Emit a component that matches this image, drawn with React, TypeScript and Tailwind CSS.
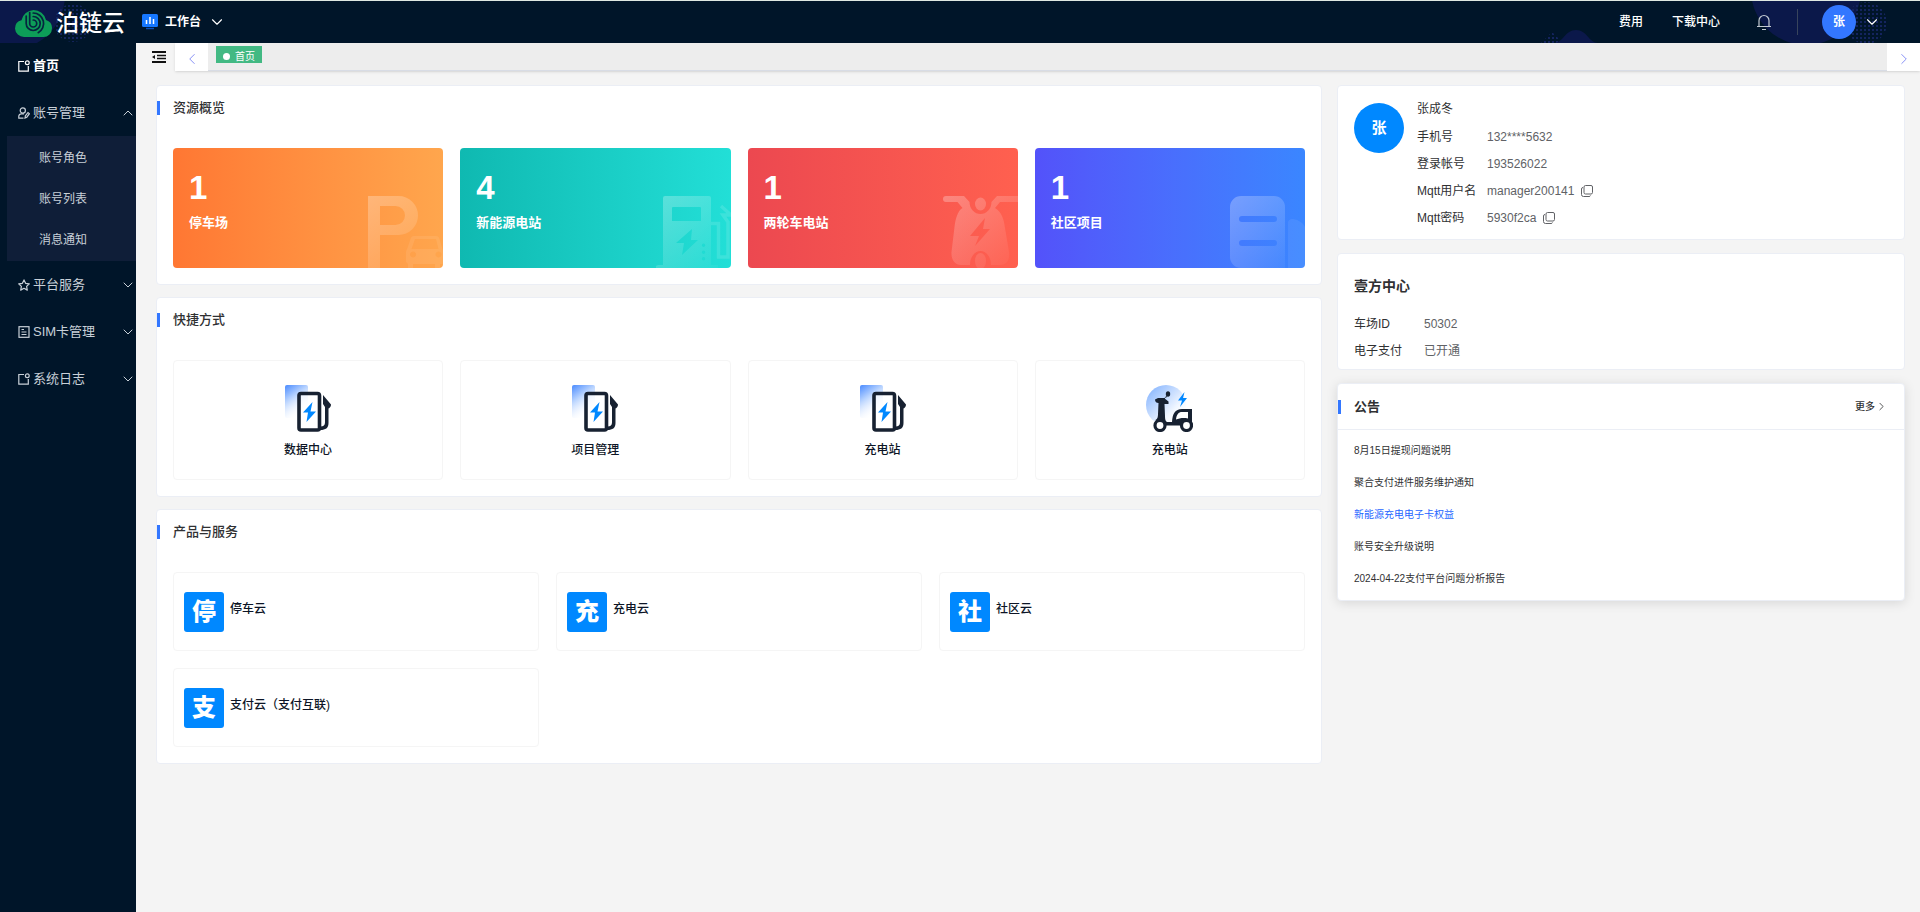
import type { ReactNode } from "react";
import { ChevronDown, ChevronLeft, ChevronRight, ChevronUp } from "lucide-react";

/* ===== Icons ===== */

function LogoIcon() {
    return (
        <svg viewBox="0 0 37 27" className="w-[37px] h-[27px]" aria-hidden="true">
            <path
                d="M9 27a9 9 0 0 1-9-8.500a8.500 8.500 0 0 1 6.500-8.200A13 13 0 0 1 18.500 0a13 13 0 0 1 12.500 10a8.500 8.500 0 0 1 6 8.300A8.700 8.700 0 0 1 28.500 27z"
                fill="#0d9d58"
            />
            <g fill="none" stroke="#06243f" strokeWidth="1.700" strokeLinecap="round">
                <path d="M14.700 2.500v11a3.500 3.500 0 1 0 3.500-3.500" />
                <path d="M11.200 6v7.500a7 7 0 1 0 7-7" />
                <path d="M18.200 3a10.500 10.500 0 0 1 5 19.700" />
            </g>
        </svg>
    );
}

function WorkbenchIcon() {
    return (
        <svg viewBox="0 0 16 16" className="w-4 h-4" aria-hidden="true">
            <rect width="16" height="13" rx="1.500" fill="#1677ff" />
            <path d="M4.500 6v4M8 3v7M11.500 5v5" stroke="#fff" strokeWidth="1.500" />
            <path d="M4 14.500h8" stroke="#0b4fb8" strokeWidth="1.500" />
        </svg>
    );
}

function BellIcon() {
    return (
        <svg viewBox="0 0 16 18" className="w-4 h-[18px]" fill="none" stroke="#c3cad3" aria-hidden="true">
            <path d="M3 13.500V7.500a5 5 0 0 1 10 0v6M1 13.500h14M6 16.500h4" strokeWidth="1.200" />
        </svg>
    );
}

function FoldIcon() {
    return (
        <svg viewBox="0 0 14 12" className="w-[14px] h-3" stroke="#111" aria-hidden="true">
            <path d="M0 1h14M0 11h14" strokeWidth="2" />
            <path d="M5 4.500h9M5 7.500h9" strokeWidth="1.500" />
            <path d="M0 6l3-2v4z" fill="#111" stroke="none" />
        </svg>
    );
}

function PageIcon() {
    return (
        <svg viewBox="0 0 12 12" className="w-3 h-3" fill="none" stroke="currentColor" aria-hidden="true">
            <path d="M6 1.500H.8v9.700h9.500V6" strokeWidth="1.200" />
            <circle cx="9.300" cy="2.700" r="1.900" strokeWidth="1.200" />
        </svg>
    );
}

function UserIcon() {
    return (
        <svg viewBox="0 0 12 12" className="w-3 h-3" fill="none" stroke="currentColor" strokeWidth="1.200" aria-hidden="true">
            <circle cx="4.800" cy="3.500" r="2.600" />
            <path d="M6 6.800H3.500a2.500 2.500 0 0 0-2.700 2.500v1.900h4.700" />
            <path d="M7 11l.4-2.200L10 5.500l1.400 1.200l-2.600 3.500z" />
        </svg>
    );
}

function StarIcon() {
    return (
        <svg viewBox="0 0 12 12" className="w-3 h-3" fill="none" stroke="currentColor" strokeWidth="1.200" aria-hidden="true">
            <path d="M6 .9l1.600 3.400l3.700.5l-2.700 2.600l.7 3.700L6 9.300l-3.300 1.800l.7-3.700L.7 4.800l3.700-.5z" strokeLinejoin="round" />
        </svg>
    );
}

function DocIcon() {
    return (
        <svg viewBox="0 0 12 12" className="w-3 h-3" fill="none" stroke="currentColor" aria-hidden="true">
            <rect x="1" y=".7" width="10" height="10.600" strokeWidth="1.200" />
            <path d="M3.500 3.500h2.500M3.500 6h5M3.500 8.500h5" />
        </svg>
    );
}

function CopyIcon() {
    return (
        <svg viewBox="0 0 12 12" className="w-3 h-3" fill="none" stroke="#606266" aria-hidden="true">
            <rect x="3" y=".5" width="8.500" height="8.500" rx="1.500" />
            <path d="M2 2.500a1.500 1.500 0 0 0-1.500 1.500v5.500a2 2 0 0 0 2 2H8a1.500 1.500 0 0 0 1.500-1" />
        </svg>
    );
}

function ChargerIcon() {
    return (
        <svg viewBox="0 0 46 47" className="w-[46px] h-[47px]" aria-hidden="true">
            <defs>
                <linearGradient id="charger-bg" x1="0" y1="0" x2="0.5" y2="1">
                    <stop offset="0" stopColor="#4a8bff" />
                    <stop offset="0.4" stopColor="#b3d0ff" />
                    <stop offset="1" stopColor="#fff" stopOpacity="0" />
                </linearGradient>
            </defs>
            <rect width="23" height="33" rx="2" fill="url(#charger-bg)" />
            <rect x="14" y="8.500" width="20.500" height="36.500" rx="2" fill="#fff" fillOpacity="0.6" stroke="#172131" strokeWidth="3.600" />
            <path d="M27.500 17L18 27.500h5L21.500 37L31 26.500h-5.500z" fill="#0088ff" />
            <path d="M38 10l8 9.500c0 2-1.200 3.500-2.500 4V38c0 5-3 7-8 7v-3.500c3 0 4.500-1.500 4.500-4V22l-2-3z" fill="#172131" />
        </svg>
    );
}

function ScooterIcon() {
    return (
        <svg viewBox="0 0 47 47" className="w-[47px] h-[47px]" aria-hidden="true">
            <defs>
                <linearGradient id="scooter-bg" x1="0.1" y1="0.1" x2="0.8" y2="0.8">
                    <stop offset="0" stopColor="#8db9ff" />
                    <stop offset="0.8" stopColor="#f2f7ff" />
                    <stop offset="1" stopColor="#fff" />
                </linearGradient>
            </defs>
            <circle cx="20" cy="20" r="20" fill="url(#scooter-bg)" />
            <ellipse cx="22" cy="9" rx="2.200" ry="2.800" fill="#172131" />
            <path d="M21 11.500c-2.500 1-3 2-2.500 3.500" fill="none" stroke="#172131" />
            <path d="M9 14.500l3-1.500h6l4.500 3.500v2.500h-4l.5 12c0 3 .5 5.500 2 6h5c.5-8 3-13 10-13h10v13.500c1 .8 1 2 1 3H14L9.500 35c2-1 2.500-3 2.500-6l.5-11c-2 0-3.500-1-3.500-3.500z" fill="#172131" />
            <path d="M30 34.500c.5-5 2.500-7.500 6-7.500h6v6.500c-5-1-9 0-12 1z" fill="#fff" />
            <circle cx="14" cy="40.500" r="5" fill="#fff" stroke="#172131" strokeWidth="3.200" />
            <circle cx="40.500" cy="40.500" r="5" fill="#fff" stroke="#172131" strokeWidth="3.200" />
            <path d="M38.500 7l-6.500 8.500h4L34 22l7-9h-4z" fill="#0088ff" />
        </svg>
    );
}

/* ===== Watermarks drawn in the corner of the overview cards ===== */

function Watermark({ id, children }: { id: string; children: ReactNode }) {
    return (
        <svg viewBox="0 0 75 72" className="absolute right-0 bottom-0 w-[75px] h-[72px]" fill={`url(#${id})`} aria-hidden="true">
            <defs>
                <linearGradient id={id} gradientUnits="userSpaceOnUse" x1="0" y1="0" x2="70" y2="72">
                    <stop offset="0" stopColor="#fff" stopOpacity="0.28" />
                    <stop offset="1" stopColor="#fff" stopOpacity="0.02" />
                </linearGradient>
            </defs>
            {children}
        </svg>
    );
}

function ParkingMark() {
    return (
        <Watermark id="mark-parking">
            <path fillRule="evenodd" d="M0 0h30.500a19.500 19.500 0 0 1 0 39H12v33H0zM12 10v19h15.500a9.500 9.500 0 0 0 0-19z" />
            <path
                fillRule="evenodd"
                fill="#fff"
                fillOpacity="0.08"
                d="M46 40h22c2 0 3 1 3.500 3l3 10c.5 1 .5 2 .5 4v11h-3v4h-5v-4H45v4h-5v-4l-2-2V57c0-2 .5-3.500 1.500-5l3-9c.5-2 1.500-3 3.500-3zM47 43l-3.500 10h27L68 43zM45 55.500a3 3 0 1 0 .1 0zM70.500 55.500a3 3 0 1 0 .1 0z"
            />
        </Watermark>
    );
}

function ChargingMark() {
    return (
        <Watermark id="mark-charging">
            <path
                fillRule="evenodd"
                d="M9 0h44a2 2 0 0 1 2 2v67h7v3H0v-2l2-1h5V2a2 2 0 0 1 2-2zM17 11a1 1 0 0 0-1 1v13h29V12a1 1 0 0 0-1-1zM36 33L20 47h8l-2 12l16-15h-7zM47.500 47.500a1.700 1.700 0 1 0 .1 0zM47.500 54.500a1.700 1.700 0 1 0 .1 0zM47.500 61a1.700 1.700 0 1 0 .1 0z"
            />
            <path d="M55 27.500h7.500V61H72V26l-5-7h8M65 10l10 9" fill="none" stroke="#fff" strokeOpacity="0.12" strokeWidth="3.500" />
        </Watermark>
    );
}

function ScooterMark() {
    return (
        <Watermark id="mark-scooter">
            <path d="M3 0h18l5.500 6a11 12 0 0 0 22 0L54 0h21v6H57l-5 6c7 4 9 12 10 20l4 24c1 8-2 13-9 13h-9a10.500 14 0 0 0-21 0h-9c-6 0-10-5-9.500-13l3-25c1-8 3-16 8-19l-5-6H3a3 3 0 0 1 0-6zM42 22L27 40h9l-4 10l15-17h-7z" fillRule="evenodd" />
            <ellipse cx="37.500" cy="8" rx="5.500" ry="6.500" />
            <ellipse cx="37.500" cy="65" rx="5.500" ry="8" />
        </Watermark>
    );
}

function CommunityMark() {
    return (
        <Watermark id="mark-community">
            <path
                fillRule="evenodd"
                d="M11 0h33a11 11 0 0 1 11 11v61H11A11 11 0 0 1 0 61V11A11 11 0 0 1 11 0zM12 20a3 3 0 0 0 0 6h32a3 3 0 0 0 0-6zM12 44a3 3 0 0 0 0 6h32a3 3 0 0 0 0-6z"
            />
            <path d="M58 27c0-3 2-4 5-4c6 1 10 4 12 8v41H58z" fill="#fff" fillOpacity="0.07" />
        </Watermark>
    );
}

/* ===== Data ===== */

const overview = [
    { count: 1, name: "停车场", bg: "bg-linear-to-r from-[#ff7733] to-[#ffa64d]", mark: <ParkingMark /> },
    { count: 4, name: "新能源电站", bg: "bg-linear-to-r from-[#0fb9b1] to-[#22dfd7]", mark: <ChargingMark /> },
    { count: 1, name: "两轮车电站", bg: "bg-linear-to-r from-[#ec4850] to-[#ff604f]", mark: <ScooterMark /> },
    { count: 1, name: "社区项目", bg: "bg-linear-to-r from-[#5352fa] to-[#3a86ff]", mark: <CommunityMark /> },
];

const shortcuts = [
    { name: "数据中心", icon: <ChargerIcon /> },
    { name: "项目管理", icon: <ChargerIcon /> },
    { name: "充电站", icon: <ChargerIcon /> },
    { name: "充电站", icon: <ScooterIcon /> },
];

const products = ["停车云", "充电云", "社区云", "支付云（支付互联)"];

const account = [
    { label: "手机号", value: "132****5632", copy: false },
    { label: "登录帐号", value: "193526022", copy: false },
    { label: "Mqtt用户名", value: "manager200141", copy: true },
    { label: "Mqtt密码", value: "5930f2ca", copy: true },
];

const notices = [
    { title: "8月15日提现问题说明", active: false },
    { title: "聚合支付进件服务维护通知", active: false },
    { title: "新能源充电电子卡权益", active: true },
    { title: "账号安全升级说明", active: false },
    { title: "2024-04-22支付平台问题分析报告", active: false },
];

/* ===== Layout parts ===== */

function HeaderDecor() {
    return (
        <>
            <svg className="absolute left-0 top-0 w-[120px] h-[42px]" viewBox="0 0 120 42" aria-hidden="true">
                <defs>
                    <pattern id="header-dots" width="4" height="4" patternUnits="userSpaceOnUse">
                        <rect width="2" height="2" fill="#14245e" />
                    </pattern>
                </defs>
                <circle cx="10" cy="-6" r="55" fill="#0b184a" />
                <circle cx="73" cy="22" r="19" fill="url(#header-dots)" />
            </svg>
            <svg className="absolute right-0 top-0 w-[400px] h-[42px]" viewBox="0 0 400 42" aria-hidden="true">
                <path d="M32 31l12 12H20z" fill="url(#header-dots)" />
                <path d="M34 42c9 0 11-13 22-13s13 13 22 13z" fill="#0b184a" />
                <circle cx="286" cy="-11" r="55" fill="#0b184a" />
                <circle cx="346" cy="22" r="21" fill="url(#header-dots)" />
            </svg>
        </>
    );
}

function Header() {
    return (
        <header className="relative flex items-center h-[43px] border-t border-[#dfe8e2] bg-[#001529] text-white text-xs">
            <HeaderDecor />
            <div className="relative flex items-center w-full pl-[15px] pr-[39px]">
                <a href="#" className="flex items-center gap-1 w-[127px] pt-[2px]">
                    <LogoIcon />
                    <span className="text-[23px] leading-[34px] font-medium">泊链云</span>
                </a>
                <button className="flex items-center font-bold">
                    <WorkbenchIcon />
                    <span className="ml-[7px] mr-[7px]">工作台</span>
                    <ChevronDown size={18} strokeWidth={1.5} />
                </button>
                <nav className="flex items-center ml-auto">
                    <a href="#" className="mr-[29px] font-medium">费用</a>
                    <a href="#" className="mr-9 font-medium">下载中心</a>
                    <button aria-label="消息">
                        <BellIcon />
                    </button>
                    <span className="w-px h-[26px] ml-[25px] mr-6 bg-[#38445c]" />
                    <button className="flex items-center gap-[7px]">
                        <span className="flex items-center justify-center w-[34px] h-[34px] rounded-full bg-[#3377ff] font-bold">张</span>
                        <ChevronDown size={18} strokeWidth={1.5} />
                    </button>
                </nav>
            </div>
        </header>
    );
}

function MenuItem({ icon, label, open }: { icon: ReactNode; label: string; open?: boolean }) {
    return (
        <button className="flex items-center w-full h-[47px] pl-[18px] text-[13px] text-[#c8d0d8]">
            {icon}
            <span className="ml-[3px] mr-auto">{label}</span>
            {open ? <ChevronUp size={16} strokeWidth={1.5} /> : <ChevronDown size={16} strokeWidth={1.5} />}
        </button>
    );
}

function Sidebar() {
    return (
        <aside className="w-[136px] shrink-0 bg-[#001529]">
            <a href="#" className="flex items-center gap-[3px] h-[46px] pl-[18px] text-[13px] font-bold text-white">
                <PageIcon />
                首页
            </a>
            <MenuItem icon={<UserIcon />} label="账号管理" open />
            <ul className="ml-[7px] py-px bg-[#0f1e38] text-xs text-[#c8d0d8]">
                {["账号角色", "账号列表", "消息通知"].map((name) => (
                    <li key={name}>
                        <a href="#" className="flex items-center h-[41px] pl-8">{name}</a>
                    </li>
                ))}
            </ul>
            <MenuItem icon={<StarIcon />} label="平台服务" />
            <MenuItem icon={<DocIcon />} label="SIM卡管理" />
            <MenuItem icon={<PageIcon />} label="系统日志" />
        </aside>
    );
}

function TabBar() {
    return (
        <div className="flex h-7">
            <button aria-label="收起菜单" className="flex items-center justify-center w-[39px] pl-[6px]">
                <FoldIcon />
            </button>
            <div className="flex flex-1 bg-[#ededed] border-b border-[#d8dce5] shadow-sm">
                <button aria-label="向左" className="flex items-center justify-center w-[33px] h-7 pt-1 bg-white text-[#7c86f5]">
                    <ChevronLeft size={18} strokeWidth={1.2} />
                </button>
                <a href="#" className="flex items-center gap-[5px] h-[17px] mt-[3px] ml-2 pl-[7px] pr-[7px] pt-1 bg-[#42b983] text-[10px] text-white">
                    <span className="w-[7px] h-[7px] rounded-full bg-white" />
                    首页
                </a>
                <button aria-label="向右" className="flex items-center justify-center w-[33px] h-7 pt-1 ml-auto bg-white text-[#7c86f5]">
                    <ChevronRight size={18} strokeWidth={1.2} />
                </button>
            </div>
        </div>
    );
}

function Panel({ title, children }: { title: string; children: ReactNode }) {
    return (
        <section className="bg-white border border-[#ebeef5] rounded">
            <div className="flex items-center h-[44px]">
                <span className="w-[3px] h-[14px] bg-[#3377ff]" />
                <h2 className="ml-[13px] text-[13px] font-medium text-[#303133]">{title}</h2>
            </div>
            <div className="px-4 pt-[18px] pb-4">{children}</div>
        </section>
    );
}

function ProfileCard() {
    return (
        <section className="flex gap-[13px] px-4 pt-[10px] pb-2 bg-white border border-[#ebeef5] rounded text-xs text-[#303133]">
            <span className="flex items-center justify-center w-[50px] h-[50px] mt-[7px] rounded-full bg-[#0088ff] text-[15px] font-bold text-white">
                张
            </span>
            <div>
                <p className="leading-[27px]">张成冬</p>
                <dl>
                    {account.map((item) => (
                        <div key={item.label} className="flex items-center h-[27px]">
                            <dt className="w-[70px]">{item.label}</dt>
                            <dd className="flex items-center gap-[7px] text-[#606266]">
                                {item.value}
                                {item.copy && (
                                    <button aria-label={`复制${item.label}`}>
                                        <CopyIcon />
                                    </button>
                                )}
                            </dd>
                        </div>
                    ))}
                </dl>
            </div>
        </section>
    );
}

function SiteCard() {
    return (
        <section className="px-4 pt-5 pb-[5px] bg-white border border-[#ebeef5] rounded text-xs text-[#303133]">
            <h2 className="mb-3 text-sm leading-6 font-bold">壹方中心</h2>
            <dl>
                <div className="flex items-center h-[27px]">
                    <dt className="w-[70px]">车场ID</dt>
                    <dd className="text-[#606266]">50302</dd>
                </div>
                <div className="flex items-center h-[27px]">
                    <dt className="w-[70px]">电子支付</dt>
                    <dd className="text-[#606266]">已开通</dd>
                </div>
            </dl>
        </section>
    );
}

function NoticeCard() {
    return (
        <section className="bg-white border border-[#ebeef5] rounded shadow-[0_2px_12px_rgba(0,0,0,0.12)]">
            <div className="flex items-center h-[46px] border-b border-[#ebeef5] pr-4">
                <span className="w-[3px] h-[14px] bg-[#3377ff]" />
                <h2 className="ml-[13px] text-[13px] font-bold text-[#303133]">公告</h2>
                <a href="#" className="flex items-center ml-auto text-[10px] font-medium text-[#303133]">
                    更多
                    <ChevronRight size={13} strokeWidth={1.5} />
                </a>
            </div>
            <ul className="px-4 py-[5px] text-[10px] text-[#303133]">
                {notices.map((item) => (
                    <li key={item.title}>
                        <a href="#" className={item.active ? "block leading-8 text-[#1f66ff]" : "block leading-8"}>
                            {item.title}
                        </a>
                    </li>
                ))}
            </ul>
        </section>
    );
}

export default function App() {
    return (
        <div className="flex flex-col min-h-screen bg-[#f4f4f4] font-['Liberation_Sans','Noto_Sans_CJK_SC',sans-serif]">
            <Header />
            <div className="flex flex-1">
                <Sidebar />
                <div className="flex-1 min-w-0">
                    <TabBar />
                    <main className="grid grid-cols-[1166fr_568fr] items-start gap-[15px] pt-[14px] pl-5 pr-[15px] pb-5">
                        <div className="flex flex-col gap-3">
                            <Panel title="资源概览">
                                <div className="grid grid-cols-4 gap-[17px]">
                                    {overview.map((item) => (
                                        <a
                                            key={item.name}
                                            href="#"
                                            className={`relative block h-[120px] pt-5 pl-4 rounded overflow-hidden text-white font-bold ${item.bg}`}
                                        >
                                            <p className="text-[33px] leading-[40px]">{item.count}</p>
                                            <p className="mt-[5px] text-[13px] leading-5">{item.name}</p>
                                            {item.mark}
                                        </a>
                                    ))}
                                </div>
                            </Panel>

                            <Panel title="快捷方式">
                                <div className="grid grid-cols-4 gap-[17px]">
                                    {shortcuts.map((item, i) => (
                                        <a
                                            key={i}
                                            href="#"
                                            className="flex flex-col items-center gap-[10px] h-[120px] pt-6 border border-[#f5f5f5] rounded text-xs font-medium text-[#0d1526]"
                                        >
                                            {item.icon}
                                            {item.name}
                                        </a>
                                    ))}
                                </div>
                            </Panel>

                            <Panel title="产品与服务">
                                <div className="grid grid-cols-3 gap-[17px]">
                                    {products.map((name) => (
                                        <a
                                            key={name}
                                            href="#"
                                            className="flex items-center gap-[6px] h-[79px] pl-[10px] border border-[#f5f5f5] rounded"
                                        >
                                            <span className="flex items-center justify-center w-10 h-10 rounded-[3px] bg-[#0088ff] text-2xl font-black text-white">
                                                {name[0]}
                                            </span>
                                            <span className="pb-[6px] text-xs font-medium text-[#0d1526]">{name}</span>
                                        </a>
                                    ))}
                                </div>
                            </Panel>
                        </div>

                        <div className="flex flex-col gap-[13px]">
                            <ProfileCard />
                            <SiteCard />
                            <NoticeCard />
                        </div>
                    </main>
                </div>
            </div>
        </div>
    );
}
